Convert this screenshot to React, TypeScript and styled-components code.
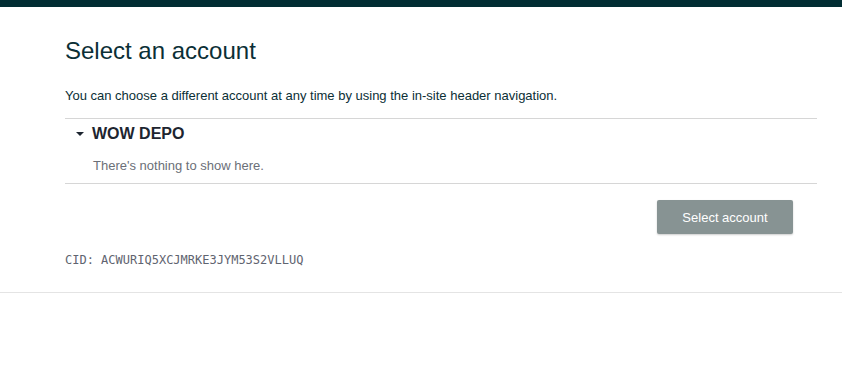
import React from "react";
import styled, { createGlobalStyle } from "styled-components";

const Global = createGlobalStyle`
  html, body { margin: 0; padding: 0; background: #ffffff; }
  body { font-family: "Liberation Sans", Arial, sans-serif; }
`;

const TopBar = styled.div`
  height: 7px;
  background: #022d33;
`;

const Main = styled.main`
  padding: 0 25px 0 65px;
  border-bottom: 1px solid #e4e4e4;
`;

const Title = styled.h1`
  margin: 0;
  padding-top: 26px;
  font-size: 24px;
  font-weight: 400;
  line-height: 36px;
  color: #0b2f36;
`;

const Intro = styled.p`
  margin: 18px 0 0;
  font-size: 13px;
  line-height: 18px;
  color: #0b2f36;
`;

const Group = styled.section`
  margin-top: 13px;
  border-top: 1px solid #d6d6d6;
  border-bottom: 1px solid #d6d6d6;
  padding: 0 0 8px;
`;

const GroupHeader = styled.div`
  display: flex;
  align-items: center;
  gap: 8px;
  height: 30px;
  padding-left: 11px;
  font-size: 16px;
  font-weight: 700;
  color: #1d2530;
`;

const Caret = styled.span`
  width: 0;
  height: 0;
  border-left: 4px solid transparent;
  border-right: 4px solid transparent;
  border-top: 4px solid #1d2530;
`;

const Empty = styled.div`
  padding-left: 28px;
  margin-top: 8px;
  font-size: 13px;
  line-height: 18px;
  color: #6b6f78;
`;

const Actions = styled.div`
  display: flex;
  justify-content: flex-end;
  padding: 16px 24px 0 0;
`;

const Button = styled.button`
  width: 136px;
  height: 34px;
  border: none;
  border-radius: 2px;
  background: #879393;
  color: #ffffff;
  font-family: "Liberation Sans", Arial, sans-serif;
  font-size: 13px;
  box-shadow: 0 1px 2px rgba(0, 0, 0, 0.2);
  cursor: pointer;
`;

const Cid = styled.div`
  margin-top: 18px;
  padding-bottom: 24px;
  font-family: "DejaVu Sans Mono", monospace;
  font-size: 12px;
  line-height: 16px;
  color: #5f6470;
`;

export default function App() {
  return (
    <>
      <Global />
      <TopBar />
      <Main>
        <Title>Select an account</Title>
        <Intro>You can choose a different account at any time by using the in-site header navigation.</Intro>
        <Group>
          <GroupHeader>
            <Caret />
            WOW DEPO
          </GroupHeader>
          <Empty>There's nothing to show here.</Empty>
        </Group>
        <Actions>
          <Button>Select account</Button>
        </Actions>
        <Cid>CID: ACWURIQ5XCJMRKE3JYM53S2VLLUQ</Cid>
      </Main>
    </>
  );
}
